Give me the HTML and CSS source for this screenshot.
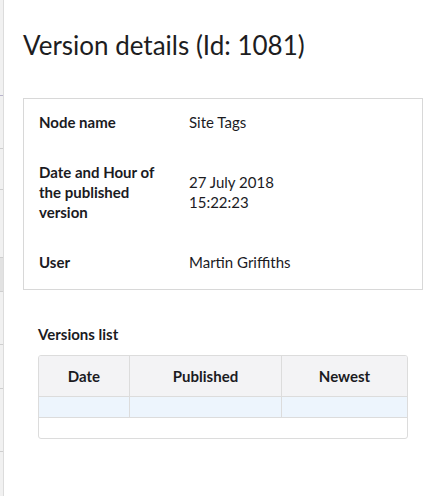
FILE: index.html
```html
<!DOCTYPE html>
<html lang="en">
<head>
  <meta charset="UTF-8">
  <meta name="viewport" content="width=device-width, initial-scale=1.0">
  <title>Version details</title>
  <link rel="stylesheet" href="styles.css">
</head>
<body>
  <div class="page">
    <!-- edge of the tree behind the dialog -->
    <div class="tree-edge">
      <div class="tree-line t1"></div>
      <div class="tree-line t2"></div>
      <div class="tree-line t3"></div>
      <div class="tree-line t4"></div>
      <div class="tree-line t5 active"></div>
      <div class="tree-line t6"></div>
      <div class="tree-line t7"></div>
      <div class="tree-line t8"></div>
    </div>

    <div class="dialog">
      <h1>Version details (Id: 1081)</h1>

      <div class="details">
        <div class="detail-row">
          <div class="label">Node name</div>
          <div class="value">Site Tags</div>
        </div>
        <div class="detail-row">
          <div class="label">Date and Hour of the published version</div>
          <div class="value">27 July 2018<br>15:22:23</div>
        </div>
        <div class="detail-row">
          <div class="label">User</div>
          <div class="value">Martin Griffiths</div>
        </div>
      </div>

      <div class="versions">
        <h2>Versions list</h2>
        <table class="version-table">
          <thead>
            <tr>
              <th class="col-date">Date</th>
              <th class="col-published">Published</th>
              <th class="col-newest">Newest</th>
            </tr>
          </thead>
          <tbody>
            <tr class="selected">
              <td></td>
              <td></td>
              <td></td>
            </tr>
            <tr class="empty">
              <td colspan="3"></td>
            </tr>
          </tbody>
        </table>
      </div>
    </div>
  </div>
</body>
</html>
```

FILE: styles.css
```css
/* base */
body {
  margin: 0;
  font-family: Lato, 'Open Sans', sans-serif;
  color: #1b1b1f;
  background-color: #fff;
}

.page {
  display: flex;
  min-height: 496px;
}

/* left strip */
.tree-edge {
  width: 3px;
  flex-shrink: 0;
  background-color: #f1f1f1;
  border-right: 1px solid #dcdcdc;
}
.tree-line {
  border-bottom: 1px solid #cfcfcf;
}
.t1 { height: 95px; border-bottom-color: #b8b4cc; }
.t2 { height: 52px; }
.t3 { height: 40px; }
.t4 { height: 67px; }
.t5 { height: 33px; }
.t6 { height: 52px; }
.t7 { height: 43px; }
.t8 { height: 62px; }
.tree-line.active {
  background-color: #e2e2e2;
}

/* dialog */
.dialog {
  flex: 1;
  padding: 0 20px 0 19px;
}

h1 {
  font-size: 26px;
  font-weight: 400;
  margin: 28px 0 36px;
  line-height: 34px;
  color: #1d1d21;
}

.details {
  border: 1px solid #d8d8d8;
  padding: 13px 15px 17px;
  display: flex;
  flex-direction: column;
  gap: 30px;
}

.detail-row {
  display: flex;
  align-items: center;
  font-size: 15px;
  line-height: 20px;
}
.label {
  width: 150px;
  flex-shrink: 0;
  font-weight: 700;
  padding-right: 20px;
  box-sizing: border-box;
}

/* versions list */
.versions {
  padding: 0 15px;
  margin-top: 34px;
}
h2 {
  font-size: 15px;
  font-weight: 700;
  line-height: 20px;
  margin: 0 0 11px;
}

.version-table {
  width: 370px;
  border-collapse: separate;
  border-spacing: 0;
  border: 1px solid #dcdcdc;
  border-radius: 3px;
  overflow: hidden;
  table-layout: fixed;
}
.version-table th {
  background-color: #f3f3f5;
  font-size: 15px;
  font-weight: 700;
  height: 40px;
  padding: 0;
  text-align: center;
  border-bottom: 1px solid #dcdcdc;
  border-left: 1px solid #dcdcdc;
}
.version-table th:first-child,
.version-table tr.selected td:first-child {
  border-left: none;
}
.col-date { width: 90px; }
.col-published { width: 151px; }

.version-table td {
  height: 20px;
  padding: 0;
  border-bottom: 1px solid #dcdcdc;
  border-left: 1px solid #dcdcdc;
}
.version-table tr.selected td {
  background-color: #edf5fd;
}
.version-table tr.empty td {
  border: none;
  height: 20px;
}
```
